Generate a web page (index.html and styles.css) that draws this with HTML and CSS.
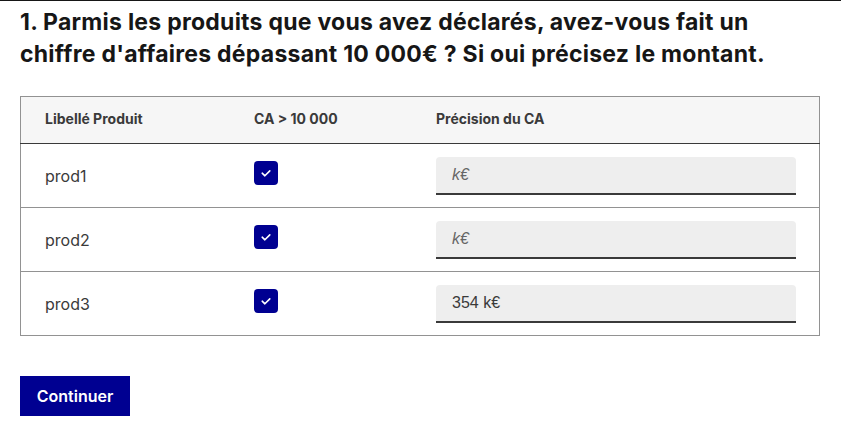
FILE: index.html
```html
<!DOCTYPE html>
<html lang="fr">
<head>
<meta charset="utf-8">
<link rel="stylesheet" href="styles.css">
</head>
<body>
<main class="page">
  <h2 class="question">1. Parmis les produits que vous avez déclarés, avez-vous fait un<br>chiffre d'affaires dépassant 10 000€ ? Si oui précisez le montant.</h2>
  <table class="grid">
    <thead>
      <tr>
        <th class="c1">Libellé Produit</th>
        <th class="c2">CA &gt; 10 000</th>
        <th class="c3">Précision du CA</th>
      </tr>
    </thead>
    <tbody>
      <tr>
        <td>prod1</td>
        <td><span class="check"><svg viewBox="0 0 24 24" width="24" height="24"><path d="M8.2 12.2 L10.9 14.8 L15.8 9.9" fill="none" stroke="#fff" stroke-width="1.6" stroke-linecap="round" stroke-linejoin="round"/></svg></span></td>
        <td><input class="field" type="text" placeholder="k€"></td>
      </tr>
      <tr>
        <td>prod2</td>
        <td><span class="check"><svg viewBox="0 0 24 24" width="24" height="24"><path d="M8.2 12.2 L10.9 14.8 L15.8 9.9" fill="none" stroke="#fff" stroke-width="1.6" stroke-linecap="round" stroke-linejoin="round"/></svg></span></td>
        <td><input class="field" type="text" placeholder="k€"></td>
      </tr>
      <tr>
        <td>prod3</td>
        <td><span class="check"><svg viewBox="0 0 24 24" width="24" height="24"><path d="M8.2 12.2 L10.9 14.8 L15.8 9.9" fill="none" stroke="#fff" stroke-width="1.6" stroke-linecap="round" stroke-linejoin="round"/></svg></span></td>
        <td><input class="field" type="text" value="354 k€"></td>
      </tr>
    </tbody>
  </table>
  <button class="btn" type="button">Continuer</button>
</main>
</body>
</html>
```

FILE: styles.css
```css
html, body {
  margin: 0;
  padding: 0;
  background: #fff;
}
body {
  border-top: 1px solid #161616;
  font-family: "Inter", "Noto Sans", sans-serif;
  color: #161616;
}
.page {
  padding: 5px 20px 0 20px;
  width: 800px;
}
.question {
  margin: 0 0 26px 0;
  font-size: 23px;
  line-height: 32px;
  font-weight: 700;
  letter-spacing: 0.25px;
  color: #161616;
}
.grid {
  width: 800px;
  border-collapse: collapse;
  border: 1px solid #929292;
  table-layout: fixed;
}
.grid th {
  background: #f6f6f6;
  height: 42px;
  padding: 0 0 4px 24px;
  text-align: left;
  font-size: 14px;
  font-weight: 700;
  color: #3a3a3a;
  border-bottom: 1px solid #3a3a3a;
}
.grid .c1 { width: 185px; }
.grid .c2 { width: 158px; }
.grid td {
  height: 63px;
  padding: 0 23px 0 24px;
  font-size: 16px;
  color: #3a3a3a;
  border-bottom: 1px solid #929292;
  vertical-align: middle;
}
.check {
  display: block;
  width: 24px;
  height: 24px;
  background: #000091;
  border-radius: 4px;
  margin: -3px 0 2px 0;
}
.check svg { display: block; }
.field {
  display: block;
  box-sizing: border-box;
  width: 360px;
  height: 38px;
  border: 0;
  border-bottom: 2px solid #3a3a3a;
  border-radius: 4px 4px 0 0;
  background: #eeeeee;
  padding: 0 16px;
  font-family: "Liberation Sans", Arial, sans-serif;
  font-size: 16px;
  color: #3a3a3a;
  outline: none;
}
.field::placeholder {
  font-style: italic;
  color: #666666;
}
.btn {
  display: block;
  margin-top: 40px;
  height: 40px;
  padding: 0 16px;
  border: 0;
  background: #000091;
  color: #fff;
  font-family: "Inter", "Noto Sans", sans-serif;
  font-size: 16px;
  font-weight: 600;
  width: 110px;
}
```
